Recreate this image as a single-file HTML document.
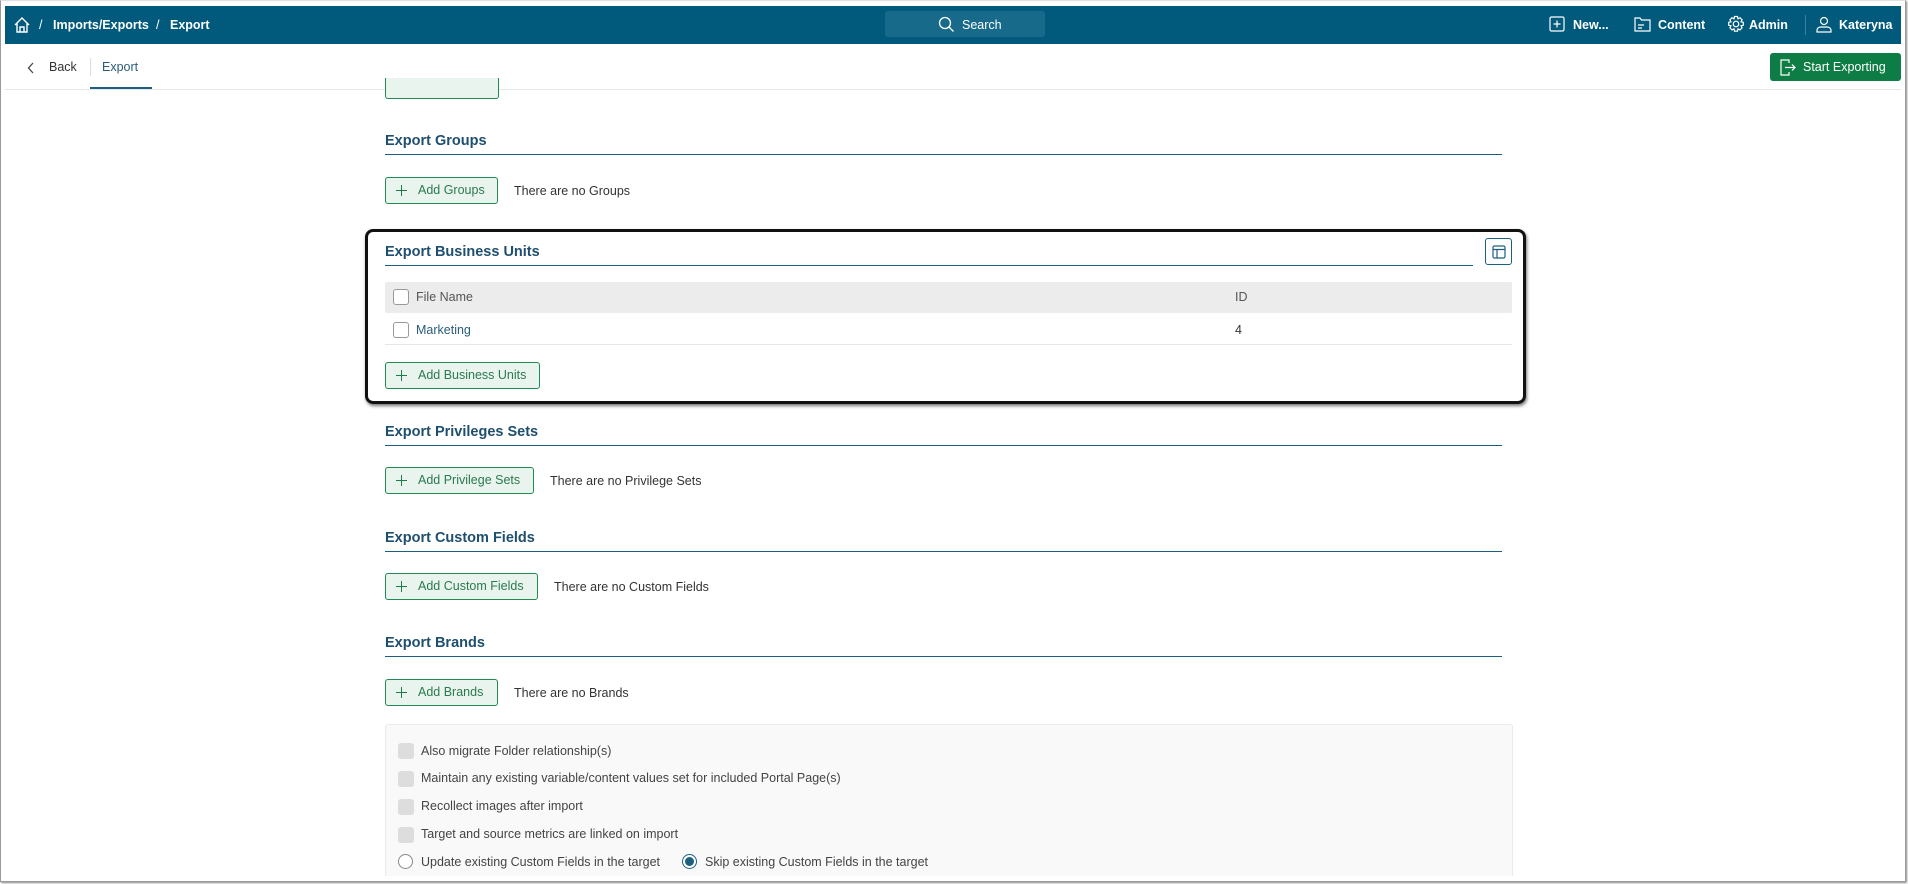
<!DOCTYPE html>
<html><head><meta charset="utf-8"><style>
*{box-sizing:border-box;margin:0;padding:0}
body{width:1908px;height:884px;overflow:hidden;background:#fff;font-family:"Liberation Sans",sans-serif;font-size:13px;color:#333;position:relative}
.a{position:absolute}
.frame{left:0;top:0;width:1906px;height:882px;border:1px solid #9a9a9a;border-top:1px solid #e0e0e0;box-shadow:1px 1px 2px #888}
.bar{left:5px;top:6px;width:1896px;height:38px;background:#015a7c;color:#fff;font-weight:bold;font-size:12.5px}
.bar span{position:absolute;top:12px}
.h{position:absolute;left:385px;width:1117px;font-size:14.5px;font-weight:bold;color:#1f4f6e;border-bottom:1.5px solid #1d5f80;padding-bottom:5px}
.btn{position:absolute;left:385px;height:27px;border:1px solid #1f8a52;border-radius:3px;background:#e9f4ee;color:#2b7a4d;font-size:12.5px;line-height:25px;padding-left:32px}
.btn:before{content:"";position:absolute;left:10px;top:12px;width:11px;height:1.3px;background:#1f7a4a}
.btn:after{content:"";position:absolute;left:15px;top:7px;width:1.3px;height:11px;background:#1f7a4a}
.t{position:absolute;font-size:12.5px;color:#333}
.cb{position:absolute;width:16px;height:16px;border-radius:3px;background:#ddd}
.opt{position:absolute;left:421px;font-size:12.5px;color:#444}
</style></head><body>
<div class="a frame"></div>
<div class="a bar">
<svg class="a" style="left:8px;top:10px" width="18" height="18" viewBox="0 0 18 18" fill="none" stroke="#fff" stroke-width="1.4"><path d="M2 9 9 2l7 7M4 7.5V16h10V7.5M7 16v-5h4v5"/></svg>
<span style="left:34px;font-weight:normal">/</span><span style="left:48px">Imports/Exports</span><span style="left:151px;font-weight:normal">/</span><span style="left:165px">Export</span>
<div class="a" style="left:880px;top:5px;width:160px;height:26px;background:#186a8b;border-radius:3px"></div>
<svg class="a" style="left:933px;top:10px" width="17" height="17" viewBox="0 0 17 17" fill="none" stroke="#fff" stroke-width="1.3"><circle cx="7" cy="7" r="5.5"/><path d="M11 11l4.5 4.5"/></svg>
<span style="left:957px;font-weight:normal">Search</span>
<svg class="a" style="left:1544px;top:10px" width="16" height="16" viewBox="0 0 16 16" fill="none" stroke="#fff" stroke-width="1.2"><rect x="1" y="1" width="14" height="14" rx="1.5"/><path d="M8 4.5v7M4.5 8h7"/></svg>
<span style="left:1568px">New...</span>
<svg class="a" style="left:1629px;top:10px" width="17" height="16" viewBox="0 0 17 16" fill="none" stroke="#fff" stroke-width="1.2"><path d="M1 2h5l1.5 2H16v11H1zM4 9h6M4 12h4"/></svg>
<span style="left:1653px">Content</span>
<svg class="a" style="left:1722px;top:9px" width="18" height="18" viewBox="0 0 18 18" fill="none" stroke="#fff" stroke-width="1.2"><circle cx="9" cy="9" r="2.8"/><path d="M7.5 1.5h3l.5 2.3 2-1.1 2.1 2.1-1.1 2 2.3.5v3l-2.3.5 1.1 2-2.1 2.1-2-1.1-.5 2.3h-3l-.5-2.3-2 1.1-2.1-2.1 1.1-2-2.3-.5v-3l2.3-.5-1.1-2 2.1-2.1 2 1.1z"/></svg>
<span style="left:1744px">Admin</span>
<div class="a" style="left:1800px;top:9px;width:1px;height:20px;background:#3a7f9c"></div>
<svg class="a" style="left:1811px;top:10px" width="16" height="17" viewBox="0 0 16 17" fill="none" stroke="#fff" stroke-width="1.2"><circle cx="8" cy="5" r="3.5"/><path d="M1 16v-1.5C1 12 3 11 5 11h6c2 0 4 1 4 3.5V16z"/></svg>
<span style="left:1834px">Kateryna</span>
</div>
<svg class="a" style="left:27px;top:62px" width="8" height="12" viewBox="0 0 8 12" fill="none" stroke="#444" stroke-width="1.3"><path d="M6 1 1.5 6 6 11"/></svg>
<div class="t" style="left:49px;top:60px">Back</div>
<div class="a" style="left:90px;top:58px;width:1px;height:18px;background:#ddd"></div>
<div class="t" style="left:102px;top:60px;color:#2a5c7a">Export</div>
<div class="a" style="left:90px;top:87px;width:62px;height:2px;background:#1d5f80"></div>
<div class="a" style="left:5px;top:89px;width:1896px;height:1px;background:#e6e6e6"></div>
<div class="a" style="left:1770px;top:53px;width:131px;height:28px;background:#0e7d45;border-radius:3px;color:#fff;font-size:12.5px;line-height:28px;padding-left:33px">Start Exporting</div>
<svg class="a" style="left:1780px;top:59px" width="16" height="17" viewBox="0 0 16 17" fill="none" stroke="#fff" stroke-width="1.2"><path d="M9 4V1H1v15h8v-3M5 8.5h10M12 5.5l3 3-3 3"/></svg>

<div class="a" style="left:385px;top:78px;width:114px;height:21px;border:1px solid #1f8a52;border-top:none;border-radius:0 0 3px 3px;background:#e9f4ee"></div>

<div class="h" style="top:133px">Export Groups</div>
<div class="btn" style="top:177px;width:113px">Add Groups</div>
<div class="t" style="left:514px;top:184px">There are no Groups</div>

<div class="a" style="left:365px;top:229px;width:1161px;height:175px;border:3px solid #111;border-radius:8px;box-shadow:1px 2px 3px #777"></div>
<div class="h" style="top:244px;width:1088px">Export Business Units</div>
<div class="a" style="left:1485px;top:238px;width:27px;height:27px;border:1px solid #1d5f80;border-radius:3px"></div>
<svg class="a" style="left:1492px;top:245px" width="14" height="14" viewBox="0 0 14 14" fill="none" stroke="#1d5f80" stroke-width="1.2"><rect x="1" y="1" width="12" height="12" rx="1.5"/><path d="M1 4.5h12M5 4.5V13"/></svg>
<div class="a" style="left:385px;top:282px;width:1127px;height:31px;background:#ececec;border-radius:2px"></div>
<div class="a" style="left:393px;top:289px;width:16px;height:16px;border:1px solid #999;border-radius:3px;background:#fff"></div>
<div class="t" style="left:416px;top:290px;color:#555">File Name</div>
<div class="t" style="left:1235px;top:290px;color:#555">ID</div>
<div class="a" style="left:393px;top:322px;width:16px;height:16px;border:1px solid #999;border-radius:3px;background:#fff"></div>
<div class="t" style="left:416px;top:323px;color:#2a5c7a">Marketing</div>
<div class="t" style="left:1235px;top:323px">4</div>
<div class="a" style="left:385px;top:344px;width:1127px;height:1px;background:#e6e6e6"></div>
<div class="btn" style="top:362px;width:155px">Add Business Units</div>

<div class="h" style="top:424px">Export Privileges Sets</div>
<div class="btn" style="top:467px;width:149px">Add Privilege Sets</div>
<div class="t" style="left:550px;top:474px">There are no Privilege Sets</div>

<div class="h" style="top:530px">Export Custom Fields</div>
<div class="btn" style="top:573px;width:153px">Add Custom Fields</div>
<div class="t" style="left:554px;top:580px">There are no Custom Fields</div>

<div class="h" style="top:635px">Export Brands</div>
<div class="btn" style="top:679px;width:113px">Add Brands</div>
<div class="t" style="left:514px;top:686px">There are no Brands</div>

<div class="a" style="left:385px;top:724px;width:1128px;height:152px;background:#f9f9f9;border:1px solid #ebebeb;border-bottom:none;border-radius:3px 3px 0 0"></div>
<div class="cb" style="left:398px;top:743px"></div><div class="opt" style="top:744px">Also migrate Folder relationship(s)</div>
<div class="cb" style="left:398px;top:771px"></div><div class="opt" style="top:771px">Maintain any existing variable/content values set for included Portal Page(s)</div>
<div class="cb" style="left:398px;top:799px"></div><div class="opt" style="top:799px">Recollect images after import</div>
<div class="cb" style="left:398px;top:827px"></div><div class="opt" style="top:827px">Target and source metrics are linked on import</div>
<div class="a" style="left:398px;top:854px;width:15px;height:15px;border:1px solid #888;border-radius:50%;background:#fff"></div>
<div class="opt" style="top:855px">Update existing Custom Fields in the target</div>
<div class="a" style="left:682px;top:854px;width:15px;height:15px;border:1px solid #1d5f80;border-radius:50%;background:#fff"></div>
<div class="a" style="left:685px;top:857px;width:9px;height:9px;border-radius:50%;background:#1d5f80"></div>
<div class="opt" style="left:705px;top:855px">Skip existing Custom Fields in the target</div>
</body></html>
